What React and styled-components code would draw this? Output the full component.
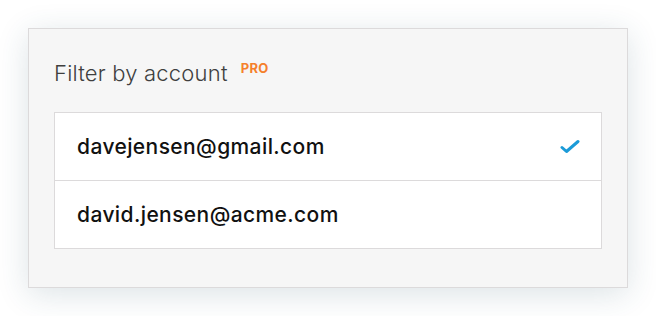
import { createGlobalStyle } from 'styled-components';
import styled from 'styled-components';

const GlobalStyle = createGlobalStyle`
  body {
    margin: 0;
    background: #ffffff;
    font-family: Inter, "Noto Sans", sans-serif;
  }
`;

const accounts = [
  { email: 'davejensen@gmail.com', selected: true },
  { email: 'david.jensen@acme.com', selected: false },
];

const CheckIcon = () => (
  <svg width="20" height="15" viewBox="0 0 20 15" fill="none">
    <path
      d="M2 8.5 L6.5 12.5 L18 2.5"
      stroke="#1b9bd8"
      strokeWidth="3"
      strokeLinecap="round"
      strokeLinejoin="round"
    />
  </svg>
);

const App = () => {
  return (
    <Page>
      <GlobalStyle />
      <Card>
        <Title>
          Filter by account
          <Badge>PRO</Badge>
        </Title>
        <AccountList>
          {accounts.map((account) => (
            <AccountRow key={account.email}>
              <Email>{account.email}</Email>
              {account.selected && <CheckIcon />}
            </AccountRow>
          ))}
        </AccountList>
      </Card>
    </Page>
  );
};

const Page = styled.div`
  padding: 28px;
`;

const Card = styled.section`
  box-sizing: border-box;
  width: 600px;
  height: 260px;
  padding: 31px 25px 38px;
  background: #f6f6f6;
  border: 1px solid #dcdadb;
  box-shadow: 0 6px 30px rgba(40, 80, 100, 0.16);
`;

const Title = styled.h2`
  display: flex;
  align-items: flex-start;
  margin: 0 0 26px;
  font-size: 22px;
  line-height: 26px;
  font-weight: 300;
  letter-spacing: 0.2px;
  color: #3f3f3f;
`;

const Badge = styled.span`
  margin-left: 13px;
  margin-top: 1px;
  font-size: 13px;
  line-height: 14px;
  font-weight: 700;
  letter-spacing: 0.3px;
  color: #f5802c;
`;

const AccountList = styled.ul`
  margin: 0;
  padding: 0;
  list-style: none;
  background: #fff;
  border: 1px solid #dcdadb;
`;

const AccountRow = styled.li`
  display: flex;
  align-items: center;
  justify-content: space-between;
  height: 67px;
  padding: 0 21px 0 22px;

  & + & {
    border-top: 1px solid #dcdadb;
  }
`;

const Email = styled.span`
  font-size: 21px;
  font-weight: 500;
  letter-spacing: 0.4px;
  color: #111;
`;

export default App;
